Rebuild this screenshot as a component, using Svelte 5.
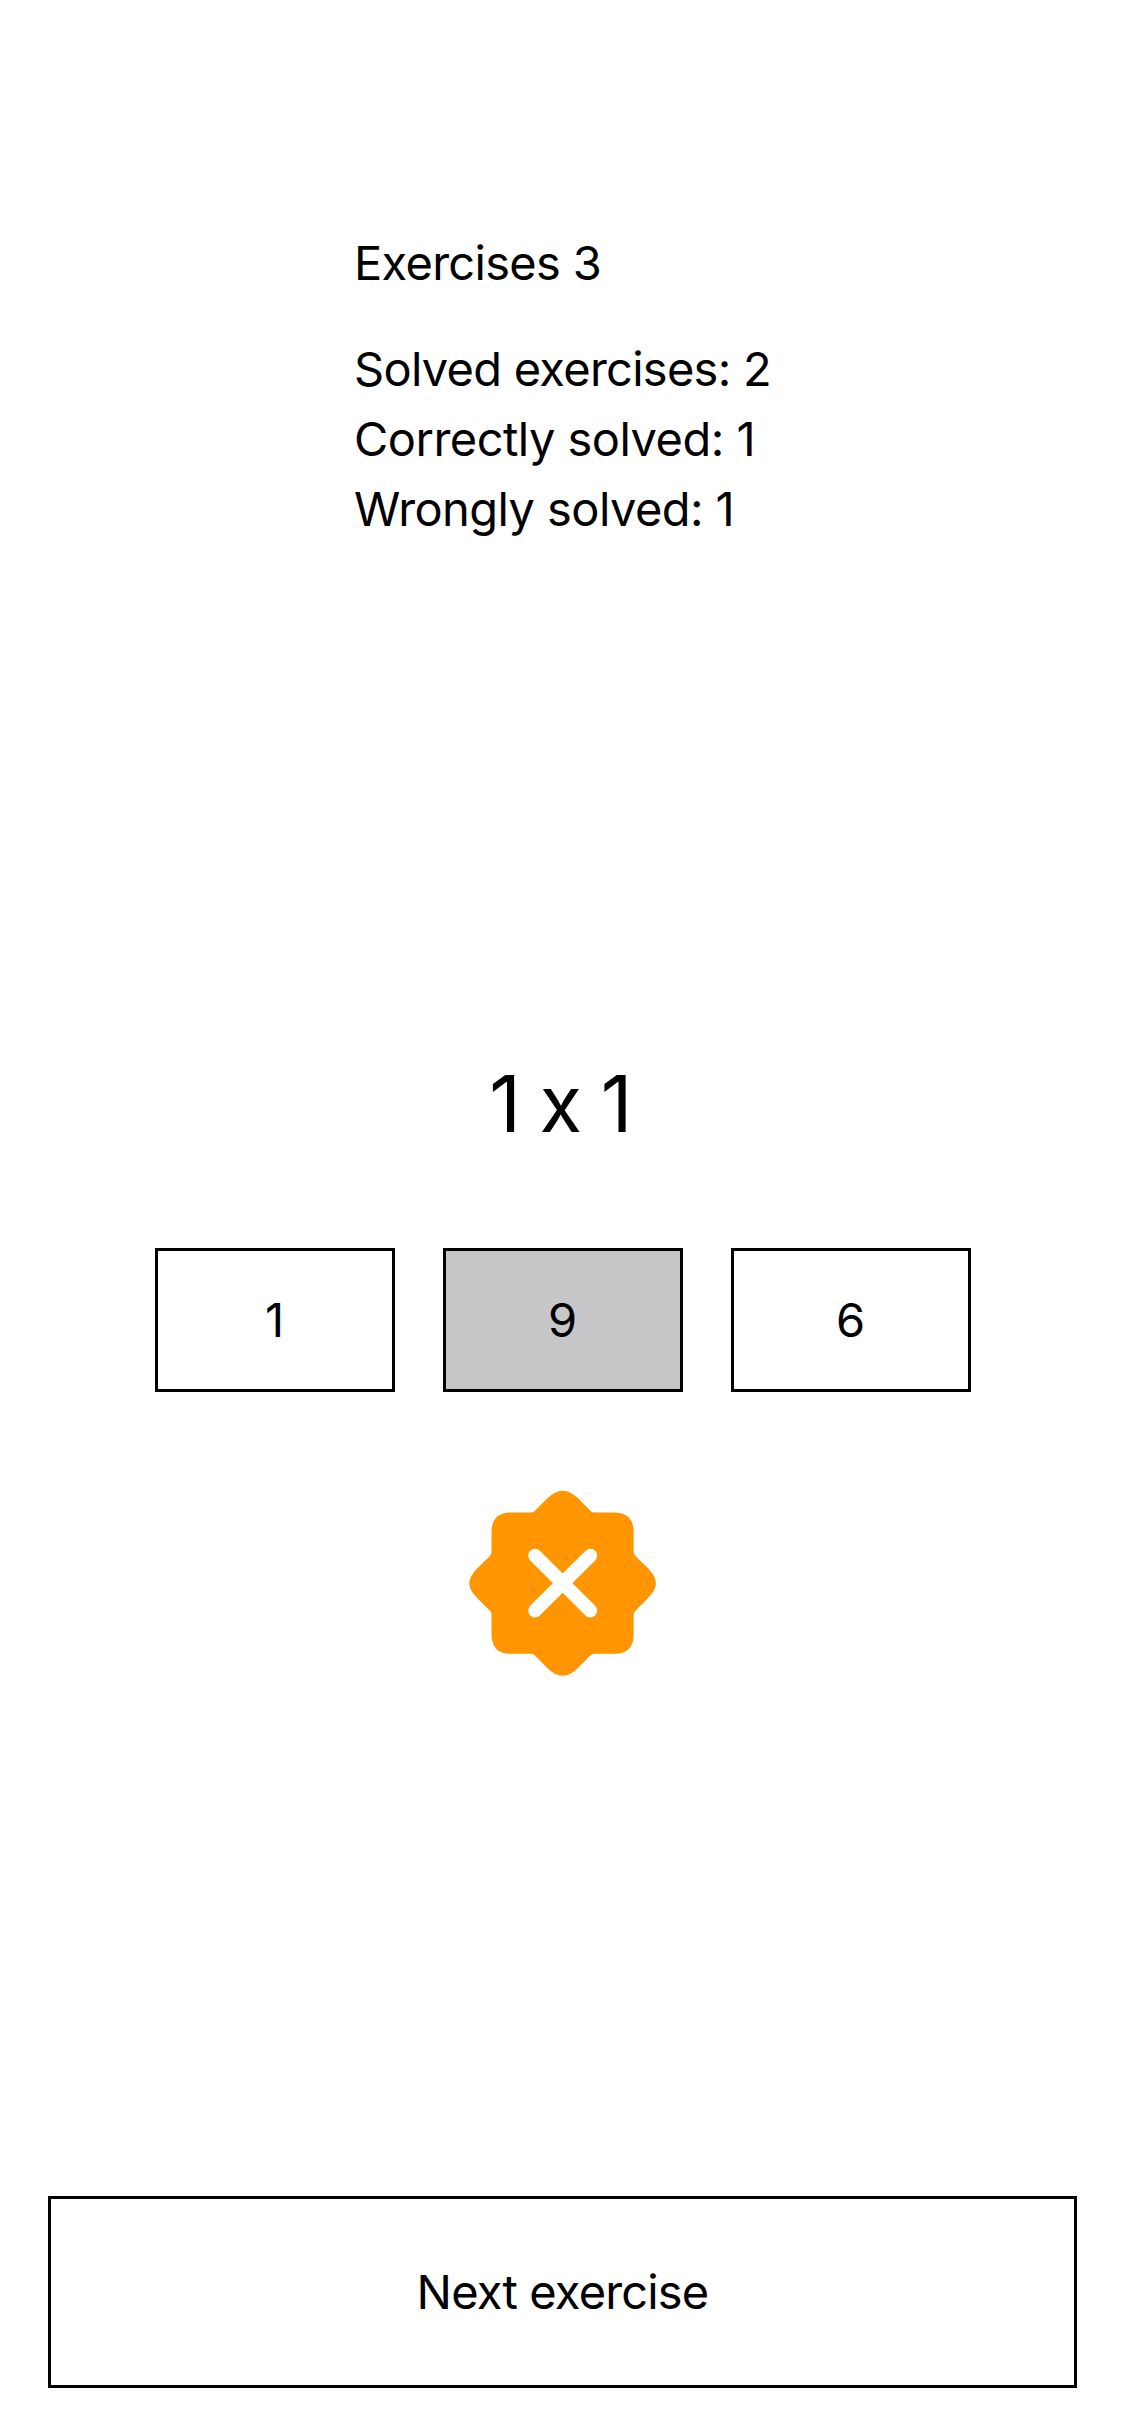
<script>
  let total = $state(3);
  let correct = $state(1);
  let wrong = $state(1);
  let solved = $derived(correct + wrong);
  let choices = [1, 9, 6];
  let selected = $state(9);
</script>

<main class="screen">
  <section class="stats">
    <p class="total">Exercises {total}</p>
    <p class="solved">Solved exercises: {solved}</p>
    <p class="correct">Correctly solved: {correct}</p>
    <p class="wrong">Wrongly solved: {wrong}</p>
  </section>

  <section class="exercise">
    <h1>1 x 1</h1>
    <div class="choices">
      {#each choices as choice}
        <button class="choice" class:selected={choice === selected} onclick={() => (selected = choice)}>{choice}</button>
      {/each}
    </div>
    <svg class="badge" viewBox="3 0 612 612" role="img" aria-label="Wrong answer">
      <path
        fill="#ff9500"
        d="M152 97.500H213Q219 97.500 224 93L262 55Q285 32 308 32Q331 32 354 55L392 93Q397 97.500 403 97.500H464C501 97.500 521 118 521 155V217Q521 222 525.500 227L564 265Q587.500 289 587.500 310Q587.500 331 564 355L525.500 393Q521 398 521 403V464C521 501 501 521.500 464 521.500H403Q397 521.500 392 526L354 564Q331 587.500 308 587.500Q285 587.500 262 564L224 526Q219 521.500 213 521.500H152C115 521.500 94.500 501 94.500 464V403Q94.500 398 90.500 393L52 355Q28 331 28 310Q28 289 52 265L90.500 227Q94.500 222 94.500 217V155C94.500 118 115 97.500 152 97.500Z"
      />
      <path d="M225 227L391 392M391 227L225 392" fill="none" stroke="#fff" stroke-width="41" stroke-linecap="round" />
    </svg>
  </section>

  <button class="next"><span>Next exercise</span></button>
</main>

<style>
  :global(body) {
    margin: 0;
    background: #fff;
  }

  .screen {
    box-sizing: border-box;
    display: flex;
    flex-direction: column;
    height: 2436px;
    padding: 228px 48px 48px;
    color: #000;
    font-family: Inter, "Liberation Sans", sans-serif;
    font-size: 47px;
  }

  .stats {
    padding-left: 306px;
    line-height: 70px;
    white-space: nowrap;
  }

  p {
    margin: 0;
  }

  .total {
    margin-bottom: 36px;
    letter-spacing: -0.7px;
  }

  .solved {
    letter-spacing: -0.73px;
  }

  .correct {
    letter-spacing: -0.52px;
  }

  .wrong {
    letter-spacing: -0.57px;
  }

  .exercise {
    display: flex;
    flex-direction: column;
    align-items: center;
    margin-top: 512px;
  }

  h1 {
    margin: 0 0 96px;
    padding-right: 5px;
    font-size: 78px;
    font-weight: 400;
    line-height: 96px;
    letter-spacing: -1.7px;
  }

  .choices {
    display: flex;
    gap: 48px;
  }

  button {
    box-sizing: border-box;
    padding: 0 0 2px;
    border: 3px solid #000;
    border-radius: 0;
    background: #fff;
    color: inherit;
    font: inherit;
  }

  .choice {
    width: 240px;
    height: 144px;
  }

  .choice.selected {
    background: #c7c7c9;
  }

  .badge {
    width: 204px;
    height: 204px;
    margin-top: 88px;
  }

  .next {
    width: 100%;
    height: 192px;
    margin-top: auto;
    letter-spacing: -0.83px;
  }
</style>
